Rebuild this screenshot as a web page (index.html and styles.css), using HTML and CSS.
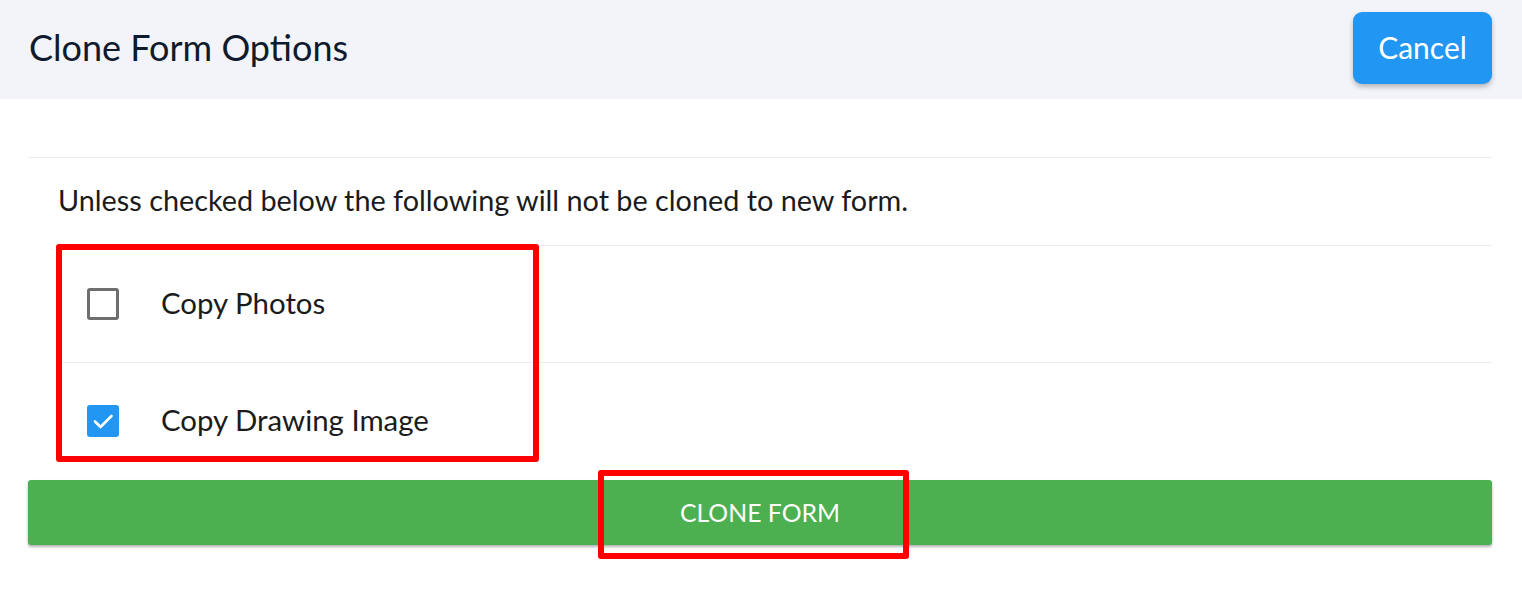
FILE: index.html
```html
<!DOCTYPE html>
<html>
<head>
<meta charset="utf-8">
<link rel="stylesheet" href="styles.css">
</head>
<body>
<header class="header">
  <h1 class="title">Clone Form Options</h1>
  <button class="cancel">Cancel</button>
</header>
<main class="content">
  <div class="intro">Unless checked below the following will not be cloned to new form.</div>
  <ul class="options">
    <li class="option">
      <span class="box"></span>
      <span class="label">Copy Photos</span>
    </li>
    <li class="option">
      <span class="box checked"><svg viewBox="0 0 32 32" width="32" height="32"><path d="M8 16.5 L13.5 22 L24.5 11" fill="none" stroke="#fff" stroke-width="2.6" stroke-linecap="round" stroke-linejoin="round"/></svg></span>
      <span class="label">Copy Drawing Image</span>
    </li>
  </ul>
  <button class="clone">CLONE FORM</button>
</main>
<div class="mark mark-options"></div>
<div class="mark mark-button"></div>
</body>
</html>
```
FILE: styles.css
```css
* { box-sizing: border-box; }
html, body { margin: 0; padding: 0; background: #fff; }
body {
  font-family: "Lato", "Noto Sans", sans-serif;
  color: #1b1b1b;
  position: relative;
  width: 1522px;
  height: 608px;
  overflow: hidden;
}
.header {
  height: 99px;
  background: #f3f4f9;
  display: flex;
  justify-content: space-between;
  align-items: flex-start;
  padding: 12px 30px 0 29px;
}
.title {
  margin: 0;
  font-weight: 400;
  font-size: 36px;
  color: #0f1a2c;
  line-height: 70px;
}
.cancel {
  width: 139px;
  height: 72px;
  border: none;
  border-radius: 9px;
  background: #2196f3;
  color: #fff;
  font-family: inherit;
  font-size: 30px;
  box-shadow: 0 3px 5px rgba(0,0,0,0.25);
  padding: 0 0 3px 0;
}
.content {
  margin-top: 58px;
  padding: 0 30px 0 28px;
}
.intro {
  border-top: 1px solid #ececec;
  height: 88px;
  display: flex;
  align-items: center;
  padding: 0 0 3px 30px;
  font-size: 28.8px;
}
.options {
  list-style: none;
  margin: 0 0 1px 30px;
  padding: 0;
}
.option {
  border-top: 1px solid #ececec;
  height: 117px;
  display: flex;
  align-items: center;
  padding-left: 29px;
}
.box {
  width: 32px;
  height: 32px;
  border: 3px solid #6e6e6e;
  border-radius: 3px;
  flex: none;
  display: flex;
  align-items: center;
  justify-content: center;
}
.box.checked {
  background: #2196f3;
  border: none;
}
.label {
  margin: 0 0 3px 42px;
  font-size: 29.4px;
}
.clone {
  display: block;
  width: 1464px;
  height: 65px;
  border: none;
  border-radius: 3px;
  background: #4caf50;
  color: #fff;
  font-family: inherit;
  font-size: 24.8px;
  box-shadow: 0 2px 3px rgba(0,0,0,0.3);
}
.mark {
  position: absolute;
  border: 6px solid #ff0000;
  border-radius: 3px;
}
.mark-options { left: 56px; top: 244px; width: 483px; height: 218px; }
.mark-button { left: 598px; top: 470px; width: 311px; height: 89px; }
```
